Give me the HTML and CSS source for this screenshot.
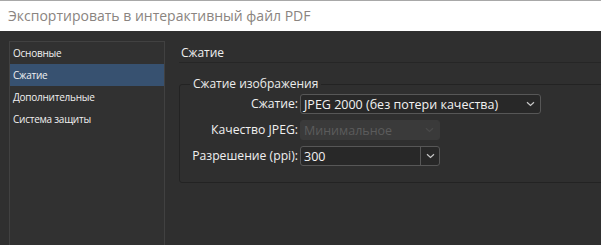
FILE: index.html
```html
<!DOCTYPE html>
<html lang="ru">
<head>
<meta charset="utf-8">
<title>Экспорт PDF</title>
<link rel="stylesheet" href="styles.css">
</head>
<body>
<div class="titlebar">Экспортировать в интерактивный файл PDF</div>
<div class="dialog">
  <nav class="sidebar">
    <div class="nav-item">Основные</div>
    <div class="nav-item selected">Сжатие</div>
    <div class="nav-item">Дополнительные</div>
    <div class="nav-item">Система защиты</div>
  </nav>
  <main class="panel">
    <div class="heading">Сжатие</div>
    <fieldset class="group">
      <legend>Сжатие изображения</legend>
      <div class="rows">
        <label class="lbl">Сжатие:</label>
        <div class="select wide"><span class="val">JPEG 2000 (без потери качества)</span><svg class="chev" width="9" height="6" viewBox="0 0 9 6"><path d="M1 1.2 L4.5 4.5 L8 1.2" fill="none" stroke="#c8c8c8" stroke-width="1.2"/></svg></div>
        <label class="lbl">Качество JPEG:</label>
        <div class="select narrow disabled"><span class="val">Минимальное</span><svg class="chev" width="9" height="6" viewBox="0 0 9 6"><path d="M1 1.2 L4.5 4.5 L8 1.2" fill="none" stroke="#4a4a4a" stroke-width="1.2"/></svg></div>
        <label class="lbl">Разрешение (ppi):</label>
        <div class="combo narrow"><span class="val">300</span><span class="btn"><svg class="chev" width="9" height="6" viewBox="0 0 9 6"><path d="M1 1.2 L4.5 4.5 L8 1.2" fill="none" stroke="#c8c8c8" stroke-width="1.2"/></svg></span></div>
      </div>
    </fieldset>
  </main>
</div>
</body>
</html>
```
FILE: styles.css
```css
html, body {
  margin: 0;
  padding: 0;
  height: 100%;
  background: #323232;
  overflow: hidden;
}
body {
  font-family: "Open Sans", "Noto Sans", sans-serif;
  display: flex;
  flex-direction: column;
}
.titlebar {
  flex: none;
  background: #ffffff;
  border-top: 1px solid #a8a8a8;
  color: #8a8480;
  font-size: 14px;
  line-height: 30px;
  padding-left: 8px;
  box-sizing: border-box;
  height: 31px;
}
.dialog {
  flex: 1;
  display: flex;
  gap: 14px;
  padding: 10px 0 0 9px;
  background: #2f2f2f;
}
.sidebar {
  width: 156px;
  box-sizing: border-box;
  border: 1px solid #414141;
  border-bottom: none;
  background: #313131;
  flex: none;
}
.nav-item {
  height: 22px;
  line-height: 22px;
  padding-left: 3px;
  font-size: 10px;
  letter-spacing: -0.25px;
  color: #f0f0f0;
}
.nav-item.selected {
  background: #375170;
}
.panel {
  flex: 1;
  min-width: 0;
}
.heading {
  color: #f0f0f0;
  font-size: 12px;
  line-height: 16px;
  padding: 4px 0 1px 2px;
  border-bottom: 1px solid #262626;
  margin-right: -20px;
}
.group {
  margin: 13px -20px 0 0;
  padding: 0 0 16px 0;
  border: 1px solid #232323;
  border-radius: 3px;
  min-width: 0;
}
.group legend {
  font-size: 12px;
  line-height: 16px;
  color: #ececec;
  padding: 0 3px;
  margin-left: 10px;
}
.rows {
  display: grid;
  grid-template-columns: 118px auto;
  column-gap: 2px;
  row-gap: 6px;
  margin-top: 2px;
  justify-content: start;
  align-items: center;
}
.lbl {
  text-align: right;
  font-size: 12.2px;
  color: #f0f0f0;
  line-height: 20px;
  white-space: nowrap;
}
.select, .combo {
  height: 20px;
  box-sizing: border-box;
  border: 1px solid #575757;
  border-radius: 3px;
  background: #282828;
  display: flex;
  align-items: center;
  font-size: 12.5px;
  color: #f2f2f2;
}
.wide { width: 241px; }
.narrow { width: 140px; }
.val {
  flex: 1;
  padding-left: 3px;
  white-space: nowrap;
  overflow: hidden;
}
.select .chev { margin-right: 5px; }
.select.disabled {
  background: #3a3a3a;
  border-color: #3a3a3a;
  color: #5c5c5c;
}
.combo .btn {
  width: 18px;
  height: 100%;
  border-left: 1px solid #575757;
  display: flex;
  align-items: center;
  justify-content: center;
}
```
